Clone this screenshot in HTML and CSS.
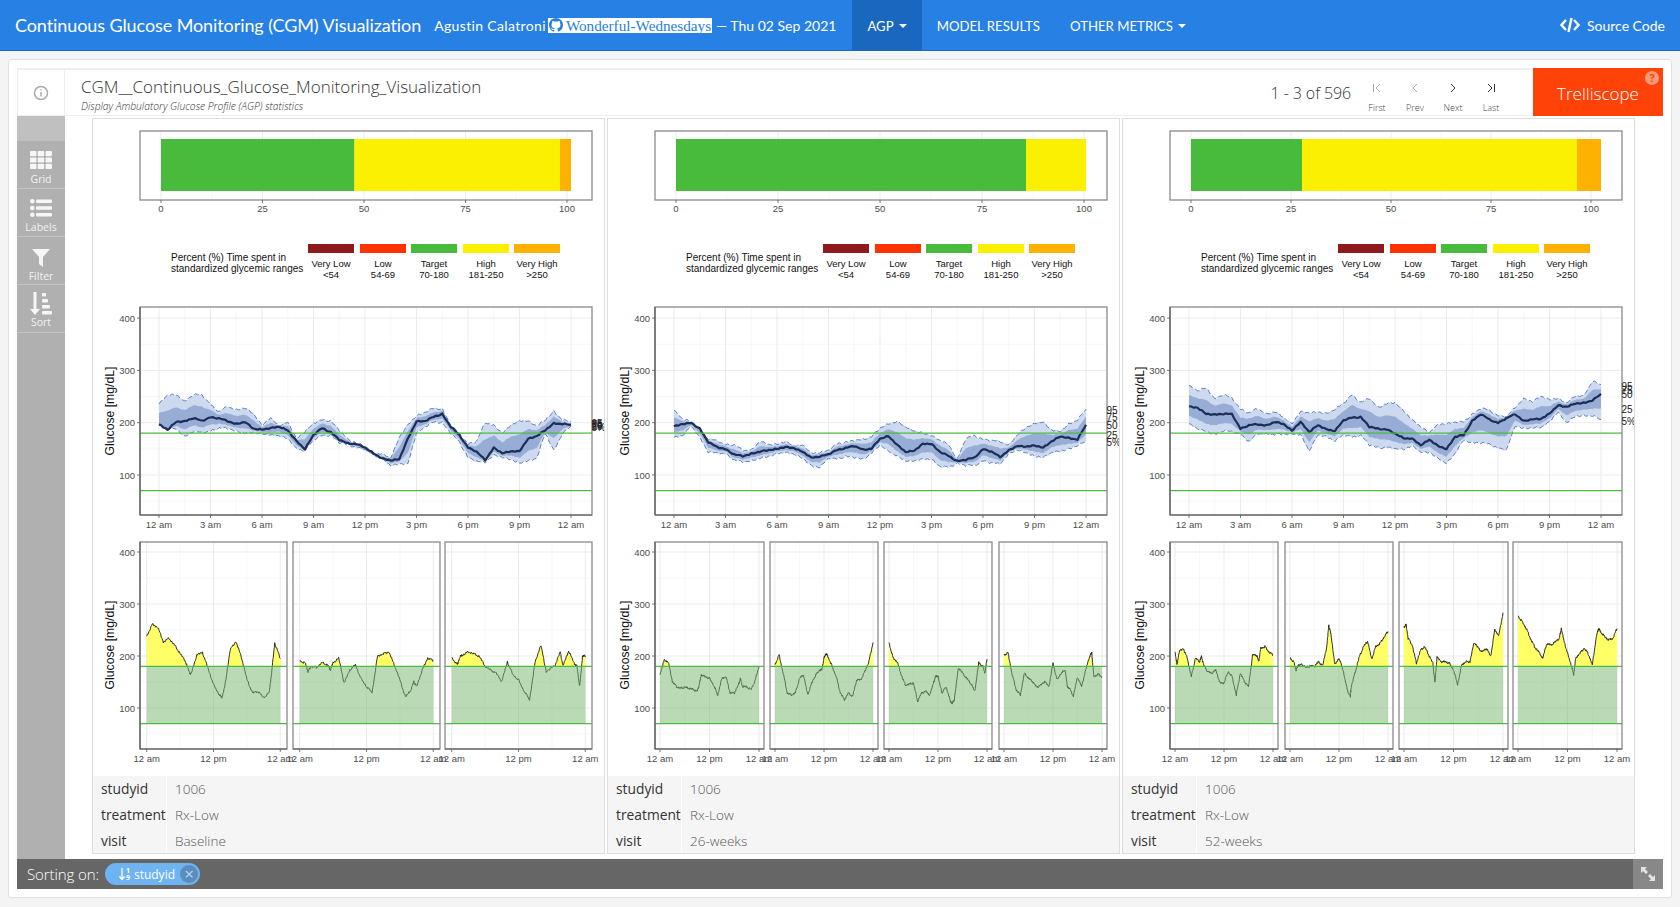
FILE: index.html
```html
<!DOCTYPE html>
<html lang="en">
<head>
  <meta charset="UTF-8" />
  <meta name="viewport" content="width=device-width, initial-scale=1" />
  <title>Continuous Glucose Monitoring (CGM) Visualization</title>
  <link rel="stylesheet" href="styles.css">
</head>
<body>
  <nav class="navbar">
    <div class="brand">Continuous Glucose Monitoring (CGM) Visualization</div>
    <div class="author">
      <span class="author-name">Agustin Calatroni</span>
      <a class="repo">
        <svg class="repo-icon" viewBox="0 0 16 16"><path d="M8 0C3.58 0 0 3.58 0 8c0 3.54 2.29 6.53 5.47 7.59.4.07.55-.17.55-.38 0-.19-.01-.82-.01-1.49-2.01.37-2.53-.49-2.69-.94-.09-.23-.48-.94-.82-1.13-.28-.15-.68-.52-.01-.53.63-.01 1.08.58 1.23.82.72 1.21 1.87.87 2.33.66.07-.52.28-.87.51-1.07-1.78-.2-3.64-.89-3.64-3.95 0-.87.31-1.59.82-2.15-.08-.2-.36-1.02.08-2.12 0 0 .67-.21 2.2.82.64-.18 1.32-.27 2-.27.68 0 1.36.09 2 .27 1.53-1.04 2.2-.82 2.2-.82.44 1.1.16 1.92.08 2.12.51.56.82 1.27.82 2.15 0 3.07-1.87 3.75-3.65 3.95.29.25.54.73.54 1.48 0 1.07-.01 1.93-.01 2.2 0 .21.15.46.55.38A8.013 8.013 0 0016 8c0-4.42-3.58-8-8-8z"/></svg>
        Wonderful-Wednesdays</a>
      <span>— Thu 02 Sep 2021</span>
    </div>
    <ul class="nav-menu">
      <li class="active">AGP <i class="caret"></i></li>
      <li>MODEL RESULTS</li>
      <li>OTHER METRICS <i class="caret"></i></li>
    </ul>
    <div class="source">
      <svg class="source-icon" viewBox="0 0 20 16"><path d="M6 3 1.5 8 6 13M14 3l4.500 5L14 13M11.500 1 8.500 15"/></svg>
      Source Code
    </div>
  </nav>

  <div class="page">
    <div class="box">
      <div class="trelliscope">
        <header class="tr-header">
          <div class="tr-info">
            <svg viewBox="0 0 16 16"><circle cx="8" cy="8" r="6.500"/><path d="M8 7v4.500M8 4.200v1.300"/></svg>
          </div>
          <div class="tr-title">
            <div class="tr-name">CGM__Continuous_Glucose_Monitoring_Visualization</div>
            <div class="tr-desc">Display Ambulatory Glucose Profile (AGP) statistics</div>
          </div>
          <div class="tr-count">1 - 3 of 596</div>
          <div class="tr-pager">
            <div class="pager-btn off">
              <svg viewBox="0 0 12 12"><path d="M2.500 2v8M9 2 5 6l4 4"/></svg>First
            </div>
            <div class="pager-btn off">
              <svg viewBox="0 0 12 12"><path d="M8 2 4 6l4 4"/></svg>Prev
            </div>
            <div class="pager-btn">
              <svg viewBox="0 0 12 12"><path d="m4 2 4 4-4 4"/></svg>Next
            </div>
            <div class="pager-btn">
              <svg viewBox="0 0 12 12"><path d="m3 2 4 4-4 4M9.500 2v8"/></svg>Last
            </div>
          </div>
          <div class="tr-logo">
            Trelliscope
            <span class="tr-help">?</span>
          </div>
        </header>

        <div class="tr-body">
          <aside class="sidebar">
            <div class="side-top"></div>
            <div class="side-btn">
              <svg class="side-icon" viewBox="0 0 22 18">
                <rect x="0" y="0" width="6.500" height="5.200" rx="1"/><rect x="7.700" y="0" width="6.500" height="5.200" rx="1"/><rect x="15.500" y="0" width="6.500" height="5.200" rx="1"/>
                <rect x="0" y="6.400" width="6.500" height="5.200" rx="1"/><rect x="7.700" y="6.400" width="6.500" height="5.200" rx="1"/><rect x="15.500" y="6.400" width="6.500" height="5.200" rx="1"/>
                <rect x="0" y="12.800" width="6.500" height="5.200" rx="1"/><rect x="7.700" y="12.800" width="6.500" height="5.200" rx="1"/><rect x="15.500" y="12.800" width="6.500" height="5.200" rx="1"/>
              </svg>
              Grid
            </div>
            <div class="side-btn">
              <svg class="side-icon" viewBox="0 0 22 18">
                <circle cx="2.300" cy="2.300" r="2.300"/><rect x="6" y="0.500" width="16" height="3.600" rx="1"/>
                <circle cx="2.300" cy="9" r="2.300"/><rect x="6" y="7.200" width="16" height="3.600" rx="1"/>
                <circle cx="2.300" cy="15.700" r="2.300"/><rect x="6" y="13.900" width="16" height="3.600" rx="1"/>
              </svg>
              Labels
            </div>
            <div class="side-btn">
              <svg class="side-icon low" viewBox="0 0 22 18"><path d="M2 0h18l-7 8v10l-4-3V8z"/></svg>
              Filter
            </div>
            <div class="side-btn">
              <svg class="side-icon tall" viewBox="0 0 22 23">
                <path d="M3.500 0h3v17h3.500l-5 6-5-6h3.500z"/>
                <rect x="12" y="1" width="4" height="3.600" rx="1"/><rect x="12" y="7" width="6" height="3.600" rx="1"/><rect x="12" y="13" width="8" height="3.600" rx="1"/><rect x="12" y="19" width="10" height="3.600" rx="1"/>
              </svg>
              Sort
            </div>
          </aside>

          <main class="panels">
            <section class="panel">
              <div class="plot" id="plot0"></div>
              <div class="cogs">
                <div class="cog"><span class="cog-name">studyid</span><span class="cog-val">1006</span></div>
                <div class="cog"><span class="cog-name">treatment</span><span class="cog-val">Rx-Low</span></div>
                <div class="cog"><span class="cog-name">visit</span><span class="cog-val">Baseline</span></div>
              </div>
            </section>
            <section class="panel">
              <div class="plot" id="plot1"></div>
              <div class="cogs">
                <div class="cog"><span class="cog-name">studyid</span><span class="cog-val">1006</span></div>
                <div class="cog"><span class="cog-name">treatment</span><span class="cog-val">Rx-Low</span></div>
                <div class="cog"><span class="cog-name">visit</span><span class="cog-val">26-weeks</span></div>
              </div>
            </section>
            <section class="panel">
              <div class="plot" id="plot2"></div>
              <div class="cogs">
                <div class="cog"><span class="cog-name">studyid</span><span class="cog-val">1006</span></div>
                <div class="cog"><span class="cog-name">treatment</span><span class="cog-val">Rx-Low</span></div>
                <div class="cog"><span class="cog-name">visit</span><span class="cog-val">52-weeks</span></div>
              </div>
            </section>
          </main>
        </div>

        <footer class="tr-footer">
          <span class="sort-label">Sorting on:</span>
          <span class="sort-pill">
            <svg class="pill-icon" viewBox="0 0 8 14"><path d="M4 1v11M1.500 9.500 4 12.500 6.500 9.500"/></svg>
            <span class="pill-digits">1<br>9</span>
            studyid
            <span class="pill-x">×</span>
          </span>
          <div class="expand">
            <svg viewBox="0 0 14 14"><path class="fill" d="M0 0h6L4 2l3 3-2 2-3-3-2 2zM14 14H8l2-2-3-3 2-2 3 3 2-2z"/></svg>
          </div>
        </footer>
      </div>
    </div>
  </div>

  <script src="charts.js"></script>
</body>
</html>
```

FILE: styles.css
```css
* {
  box-sizing: border-box;
}
body {
  margin: 0;
  background-color: #f4f4f4;
  font-family: 'Open Sans', sans-serif;
  overflow: hidden;
}

/* top navbar */
.navbar {
  display: flex;
  align-items: center;
  height: 51px;
  padding-left: 15px;
  background-color: #2780e3;
  border-bottom: 1px solid #1967be;
  color: #fff;
  font-family: 'Lato', sans-serif;
}
.brand {
  font-size: 18px;
  letter-spacing: -0.09px;
  white-space: nowrap;
}
.author {
  display: flex;
  align-items: center;
  margin-left: 13px;
  font-size: 14px;
  white-space: nowrap;
}
.author-name {
  letter-spacing: 0.35px;
}
.repo {
  display: flex;
  align-items: center;
  margin: 0 4px 0 2px;
  padding-right: 1px;
  background-color: #fff;
  color: #2780e3;
  font-family: 'Liberation Serif', serif;
  font-size: 15.200px;
  line-height: 15px;
}
.repo-icon {
  width: 14px;
  height: 14px;
  margin: 0 3px 0 1px;
  fill: #2780e3;
}
.nav-menu {
  display: flex;
  align-self: stretch;
  margin: 0 0 0 16px;
  padding: 0;
  list-style: none;
  font-size: 13.200px;
}
.nav-menu li {
  display: flex;
  align-items: center;
  gap: 5px;
  padding: 1px 15px 0;
  white-space: nowrap;
}
.nav-menu li.active {
  background-color: #1967be;
}
.caret {
  width: 0;
  height: 0;
  border-top: 4px solid #fff;
  border-left: 4px solid transparent;
  border-right: 4px solid transparent;
}
.source {
  display: flex;
  align-items: center;
  gap: 7px;
  margin-left: auto;
  padding-right: 15px;
  font-size: 14px;
}
.source-icon {
  width: 20px;
  height: 16px;
  fill: none;
  stroke: #fff;
  stroke-width: 2.400;
}

/* white card */
.page {
  padding: 8px;
}
.box {
  padding: 8px;
  background-color: #fff;
  border: 1px solid #e1e1e1;
  border-radius: 3px;
}
.trelliscope {
  display: flex;
  flex-direction: column;
  height: 821px;
}

/* trelliscope header */
.tr-header {
  display: flex;
  align-items: stretch;
  height: 48px;
  border-top: 2px solid #eeeeee;
  border-bottom: 1px solid #eeeeee;
}
.tr-info {
  display: flex;
  align-items: center;
  justify-content: center;
  width: 48px;
  border-right: 1px solid #eeeeee;
  border-left: 1px solid #eeeeee;
}
.tr-info svg {
  width: 16px;
  height: 16px;
  fill: none;
  stroke: #aaaaaa;
  stroke-width: 1.500;
}
.tr-title {
  flex: 1;
  padding: 4px 0 0 16px;
}
.tr-name {
  color: #333;
  font-size: 17px;
  font-weight: 300;
  line-height: 26px;
}
.tr-desc {
  color: #333;
  font-size: 10.300px;
  font-style: italic;
  font-weight: 300;
  line-height: 13px;
}
.tr-count {
  align-self: center;
  margin-right: 7px;
  color: #333;
  font-size: 16px;
  font-weight: 300;
  letter-spacing: -0.1px;
}
.tr-pager {
  display: flex;
  margin-right: 23px;
}
.pager-btn {
  display: flex;
  flex-direction: column;
  align-items: center;
  width: 38px;
  padding-top: 12px;
  color: #444;
  font-size: 9px;
  font-weight: 300;
}
.pager-btn svg {
  width: 12px;
  height: 12px;
  margin-bottom: 7px;
  fill: none;
  stroke: #333;
  stroke-width: 1;
}
.pager-btn.off svg {
  stroke: #aaaaaa;
}
.tr-logo {
  position: relative;
  display: flex;
  align-items: center;
  justify-content: center;
  width: 130px;
  margin: -2px 0 -1px;
  padding-top: 2px;
  background-color: #ff4308;
  color: #fff;
  font-size: 17px;
  font-weight: 300;
}
.tr-help {
  position: absolute;
  top: 3px;
  right: 4px;
  width: 14px;
  height: 14px;
  border-radius: 50%;
  background-color: #ff9a7a;
  color: #ff4308;
  font-size: 11px;
  font-weight: 700;
  line-height: 14px;
  text-align: center;
}

.tr-body {
  display: flex;
  flex: 1;
  min-height: 0;
}

/* left sidebar */
.sidebar {
  width: 48px;
  background-color: #b0b0b0;
  color: #f2f2f2;
}
.side-top {
  height: 25px;
  background-color: #c0c0c0;
}
.side-btn {
  display: flex;
  flex-direction: column;
  align-items: center;
  height: 48px;
  padding-top: 10px;
  border-bottom: 1px solid #c6c6c6;
  font-size: 10.500px;
  line-height: 13px;
}
.side-icon {
  width: 22px;
  height: 18px;
  margin-bottom: 4px;
  fill: #f6f6f6;
}
.side-icon.low {
  margin-top: 2px;
  margin-bottom: 3px;
}
.side-icon.tall {
  height: 23px;
  margin-top: -3px;
  margin-bottom: 1px;
}

/* display panels */
.panels {
  display: flex;
  flex: 1;
  gap: 2px;
  align-items: flex-start;
  padding: 2px 0 0 27px;
}
.panel {
  width: 513px;
  height: 736px;
  border: 1px solid #dddddd;
}
.plot {
  height: 657px;
  overflow: hidden;
}
.plot svg {
  display: block;
}
.cogs {
  height: 77px;
  background-color: #f5f5f5;
}
.cog {
  display: flex;
  height: 26px;
  font-size: 13.800px;
  line-height: 26px;
}
.cog:last-child {
  height: 25px;
}
.cog-name {
  width: 74px;
  padding-left: 8px;
  border-right: 1px solid #ffffff;
  color: #333;
  font-weight: 400;
}
.cog-val {
  padding-left: 8px;
  color: #555;
  font-size: 13.500px;
  font-weight: 300;
}

/* sort footer */
.tr-footer {
  position: relative;
  display: flex;
  align-items: center;
  flex: none;
  height: 30px;
  padding-left: 10px;
  background-color: #666;
  color: #fff;
}
.sort-label {
  font-size: 15px;
  font-weight: 300;
  letter-spacing: -0.1px;
}
.sort-pill {
  display: flex;
  align-items: center;
  height: 22px;
  margin-left: 6px;
  padding: 0 2px 0 13px;
  border-radius: 11px;
  background-color: #6eb4f2;
  font-size: 12px;
}
.pill-icon {
  width: 8px;
  height: 14px;
  fill: none;
  stroke: #fff;
  stroke-width: 1.300;
}
.pill-digits {
  margin: 0 4px 0 0;
  font-size: 7px;
  font-weight: 700;
  line-height: 7px;
}
.pill-x {
  width: 18px;
  height: 18px;
  margin-left: 5px;
  border-radius: 50%;
  background-color: #5a8dbd;
  color: #b9d8f4;
  font-size: 17px;
  line-height: 17px;
  text-align: center;
}
.expand {
  display: flex;
  align-items: center;
  justify-content: center;
  width: 30px;
  height: 30px;
  margin-left: auto;
  background-color: #888;
}
.expand svg {
  width: 14px;
  height: 14px;
  fill: #e4e4e4;
}

/* svg plot parts */
.plot text {
  font-family: 'Liberation Sans', sans-serif;
}
.tick-label {
  fill: #4d4d4d;
  font-size: 9.500px;
}
.axis-title {
  fill: #111;
  font-size: 12.200px;
}
.legend-text {
  fill: #111;
  font-size: 10px;
}
.legend-key {
  fill: #111;
  font-size: 9.500px;
}
.end-label {
  fill: #222;
  font-size: 10px;
}
.grid-major {
  stroke: #ebebeb;
  stroke-width: 1;
}
.grid-minor {
  stroke: #f5f5f5;
  stroke-width: 0.800;
}
.frame {
  fill: none;
  stroke: #8a8a8a;
  stroke-width: 1.300;
}
.axis-line {
  stroke: #5a5a5a;
  stroke-width: 1.200;
}
.tick-mark {
  stroke: #555;
  stroke-width: 0.800;
}
.band-outer {
  fill: #cdd9ef;
}
.band-inner {
  fill: #98add6;
}
.band-edge {
  fill: none;
  stroke: #4a76bd;
  stroke-width: 0.900;
  stroke-dasharray: 5 2.500;
}
.median {
  fill: none;
  stroke: #1c2e55;
  stroke-width: 2.200;
  stroke-linejoin: round;
}
.target-line {
  stroke: #4dbb3f;
  stroke-width: 1.200;
}
.facet-high {
  fill: #ffff66;
}
.facet-line {
  fill: none;
  stroke: #1d1d1d;
  stroke-width: 0.900;
}
.facet-target {
  fill: rgba(117, 179, 107, 0.5);
}
```

FILE: charts.js
```js
// all plots share the same panel coordinates, one svg per panel
const PLOT_W = 511;
const PLOT_H = 657;
const FRAME_L = 47;
const FRAME_R = 499;

const LEGEND = [
  { color: '#8f1a1e', top: 'Very Low', bottom: '<54', x: 215 },
  { color: '#ff3300', top: 'Low', bottom: '54-69', x: 267 },
  { color: '#48bb3c', top: 'Target', bottom: '70-180', x: 318 },
  { color: '#faf000', top: 'High', bottom: '181-250', x: 370 },
  { color: '#fdb100', top: 'Very High', bottom: '>250', x: 421 },
];

const PANELS = [
  {
    bars: [[68, 261.5, '#48bb3c'], [261.5, 467, '#faf000'], [467, 478, '#fdb100']],
    tickEnd: 474,
    p95: [236, 254, 252, 241, 254, 252, 236, 220, 231, 225, 227, 218, 195, 208, 195, 201, 169, 184, 198, 206, 204, 185, 169, 161, 155, 144, 139, 133, 173, 195, 214, 220, 227, 227, 195, 179, 160, 163, 201, 195, 179, 197, 203, 203, 195, 204, 222, 206, 200],
    p50: [197, 187, 201, 203, 209, 203, 211, 208, 203, 198, 201, 189, 187, 189, 193, 185, 165, 150, 176, 190, 182, 167, 161, 159, 152, 142, 131, 128, 131, 169, 203, 203, 211, 217, 192, 176, 153, 144, 129, 152, 141, 146, 145, 169, 175, 185, 199, 198, 195],
    p5: [195, 190, 187, 174, 184, 180, 185, 189, 189, 185, 179, 182, 179, 175, 176, 169, 150, 147, 166, 176, 176, 161, 159, 152, 148, 139, 129, 118, 122, 120, 182, 192, 201, 201, 179, 163, 134, 125, 125, 138, 133, 131, 122, 127, 133, 179, 147, 179, 192],
    facets: [
      { l: 47, r: 194, pts: [[0, 238], [1, 261], [2, 255], [3, 227], [4, 234], [5, 221], [6, 205], [7, 189], [7.7, 167], [8, 166], [9, 202], [10, 207], [11, 177], [12, 145], [13, 126], [13.5, 120], [14, 139], [15, 212], [16, 228], [17, 199], [18, 155], [19, 129], [20, 132], [21, 120], [22, 129], [22.5, 174], [23, 225], [24, 195]] },
      { l: 200, r: 347, pts: [[0, 191], [1, 186], [1.5, 170], [2, 180], [3, 178], [4, 187], [5, 183], [5.5, 173], [6, 187], [7, 196], [8, 148], [9, 173], [10, 183], [11, 157], [12, 141], [13, 130], [14, 200], [15, 204], [16, 208], [17, 183], [18, 154], [19, 121], [20, 135], [20.5, 151], [21, 141], [22, 173], [23, 196], [24, 191]] },
      { l: 352, r: 499, pts: [[0, 197], [1, 183], [1.5, 199], [2, 202], [3, 208], [4, 204], [5, 199], [6, 180], [7, 173], [8, 167], [9, 151], [10, 189], [11, 164], [12, 154], [13, 132], [14, 116], [15, 189], [16, 221], [17, 170], [18.5, 181], [19.5, 208], [20, 181], [21, 210], [22, 186], [22.5, 180], [23, 141], [23.5, 200], [24, 200]] },
    ],
    pad: 6.7,
  },
  {
    bars: [[68, 418, '#48bb3c'], [418, 478, '#faf000']],
    tickEnd: 476,
    p95: [224, 208, 201, 187, 169, 165, 159, 157, 147, 148, 163, 159, 159, 163, 157, 157, 141, 144, 146, 160, 163, 165, 169, 173, 189, 199, 201, 192, 185, 179, 176, 166, 157, 131, 169, 175, 169, 165, 165, 157, 176, 192, 198, 201, 187, 182, 198, 206, 224],
    p50: [193, 198, 199, 189, 163, 153, 150, 139, 136, 141, 144, 148, 150, 153, 152, 144, 133, 136, 139, 148, 152, 155, 149, 150, 169, 175, 157, 144, 147, 159, 160, 144, 136, 127, 129, 133, 150, 144, 135, 147, 155, 155, 156, 152, 165, 173, 171, 168, 195],
    p5: [172, 176, 192, 173, 144, 141, 142, 128, 125, 128, 131, 136, 141, 142, 141, 131, 117, 116, 131, 131, 136, 133, 131, 141, 157, 147, 135, 127, 128, 129, 131, 116, 114, 123, 118, 118, 128, 122, 122, 141, 147, 144, 135, 133, 144, 144, 150, 157, 163],
    facets: [
      { l: 47, r: 156, pts: [[0, 164], [1, 192], [2, 189], [3, 151], [4, 141], [5, 138], [6, 140], [7, 138], [8, 136], [9, 132], [9.5, 144], [10, 164], [11, 160], [12, 157], [13, 144], [14, 125], [15, 157], [16, 160], [17, 129], [18, 129], [19, 144], [19.5, 157], [20, 141], [21, 141], [22, 135], [23, 151], [24, 180]] },
      { l: 162, r: 270, pts: [[0, 183], [1, 202], [2, 167], [3, 129], [4, 125], [5, 129], [6, 157], [7, 164], [8, 125], [9, 148], [10, 164], [11, 173], [11.5, 174], [12, 196], [12.5, 205], [13, 198], [14, 180], [15, 160], [16, 129], [17, 116], [18, 129], [19, 122], [20, 154], [21, 154], [22, 170], [23, 189], [24, 226]] },
      { l: 276, r: 384, pts: [[0, 226], [1, 196], [2, 189], [3, 164], [4, 144], [5, 146], [6, 148], [7, 113], [8, 129], [9, 132], [10, 125], [11, 151], [11.5, 162], [12, 160], [13, 129], [14, 141], [15, 113], [15.5, 109], [16, 116], [17, 178], [18, 167], [19, 157], [20, 148], [21, 132], [22, 187], [23, 180], [23.5, 167], [24, 194]] },
      { l: 391, r: 499, pts: [[0, 202], [1, 206], [2, 164], [3, 135], [4, 125], [5, 167], [6, 157], [7, 151], [8, 140], [9, 144], [10, 151], [11, 141], [12, 186], [13, 154], [14, 167], [15, 173], [15.5, 141], [16, 138], [17, 123], [18, 160], [19, 141], [20, 173], [21, 200], [21.5, 206], [22, 160], [23, 165], [24, 160]] },
    ],
    pad: 5,
  },
  {
    bars: [[68, 179, '#48bb3c'], [179, 454, '#faf000'], [454, 478, '#fdb100']],
    tickEnd: 468,
    p95: [271, 262, 265, 246, 254, 246, 227, 218, 227, 217, 220, 211, 198, 220, 220, 220, 217, 227, 236, 254, 239, 246, 230, 236, 238, 224, 204, 192, 182, 195, 199, 201, 201, 217, 227, 224, 214, 211, 230, 246, 239, 252, 243, 246, 239, 250, 252, 280, 271],
    p50: [231, 229, 216, 216, 217, 216, 189, 195, 197, 195, 201, 198, 185, 201, 183, 195, 187, 185, 204, 210, 211, 192, 189, 187, 179, 171, 169, 157, 168, 155, 150, 173, 176, 204, 216, 206, 200, 208, 217, 203, 206, 208, 217, 233, 231, 236, 238, 243, 254],
    p5: [198, 189, 182, 178, 185, 182, 179, 163, 179, 179, 176, 179, 179, 176, 147, 176, 173, 166, 176, 173, 176, 157, 153, 152, 150, 150, 155, 144, 144, 131, 123, 141, 166, 163, 161, 159, 152, 147, 195, 189, 189, 192, 201, 220, 201, 211, 214, 214, 204],
    facets: [
      { l: 47, r: 155, pts: [[0, 208], [0.5, 183], [1, 208], [2, 215], [3, 196], [4, 160], [5, 196], [6, 189], [6.5, 199], [7, 183], [8, 170], [9, 167], [10, 173], [11, 148], [12, 148], [13, 170], [14, 160], [15, 125], [16, 167], [17, 151], [18, 141], [19, 202], [20, 202], [20.5, 189], [21, 215], [22, 218], [23, 208], [24, 202]] },
      { l: 162, r: 270, pts: [[0, 197], [1, 187], [1.5, 173], [2, 183], [3, 183], [4, 178], [5, 181], [6, 180], [7, 189], [8, 181], [9, 218], [9.5, 259], [10, 243], [11, 183], [12, 196], [13, 173], [14, 135], [14.8, 122], [15, 141], [16, 170], [17, 199], [18, 218], [19, 229], [20, 194], [21, 218], [22, 224], [23, 236], [24, 247]] },
      { l: 276, r: 385, pts: [[0, 255], [0.5, 261], [1, 234], [2, 221], [3, 186], [4, 211], [5, 218], [6, 202], [7, 186], [7.5, 148], [8, 198], [9, 189], [10, 189], [11, 186], [12, 173], [13, 145], [14, 183], [15, 189], [16, 189], [17, 227], [18, 215], [19, 208], [20, 215], [21, 199], [22, 250], [23, 240], [24, 283]] },
      { l: 390, r: 499, pts: [[0, 277], [1, 266], [2, 253], [3, 234], [4, 218], [5, 208], [6, 196], [7, 224], [8, 221], [9, 227], [10, 234], [10.5, 253], [11, 234], [12, 205], [13, 180], [13.5, 164], [14, 196], [15, 205], [16, 215], [17, 205], [18, 183], [19, 237], [19.5, 253], [20, 247], [21, 237], [22, 231], [23, 234], [24, 253]] },
    ],
    pad: 5,
  },
];

const HOUR_LABELS = ['12 am', '3 am', '6 am', '9 am', '12 pm', '3 pm', '6 pm', '9 pm', '12 am'];

const xMain = h => 66 + h * (412 / 24);
const yMain = v => 356 - (v - 100) * 0.523;
const yFacet = v => 589 - (v - 100) * 0.52;

function wiggle(i, amount) {
  return (Math.sin(i * 2.3) + Math.sin(i * 5.7) * 0.6 + Math.sin(i * 1.1) * 0.4) * amount;
}

function line(x1, y1, x2, y2, cls) {
  return `<line x1="${x1}" y1="${y1}" x2="${x2}" y2="${y2}" class="${cls}" />`;
}

function text(x, y, label, cls, anchor) {
  return `<text x="${x}" y="${y}" class="${cls}" text-anchor="${anchor || 'middle'}">${label}</text>`;
}

function pathOf(points) {
  return 'M' + points.map(p => `${p[0].toFixed(1)} ${p[1].toFixed(1)}`).join('L');
}

// half hour values to a denser, slightly noisy path
function denseSeries(values, noise) {
  const out = [];
  const step = 24 / (values.length - 1);
  for (let i = 0; i <= 192; i++) {
    const h = i / 8;
    const at = Math.min(Math.floor(h / step), values.length - 2);
    const t = h / step - at;
    const v = values[at] + (values[at + 1] - values[at]) * t;
    out.push([h, v + wiggle(i, noise)]);
  }
  return out;
}

function blend(from, to, amount) {
  return from.map((v, i) => v + (to[i] - v) * amount);
}

function barChart(p) {
  let s = '';
  const step = (p.tickEnd - 68) / 4;
  for (let i = 0; i < 4; i++) {
    s += line(68 + step * (i + 0.5), 12, 68 + step * (i + 0.5), 81, 'grid-minor');
  }
  for (let i = 0; i <= 4; i++) {
    s += line(68 + step * i, 12, 68 + step * i, 81, 'grid-major');
  }
  p.bars.forEach(b => {
    s += `<rect x="${b[0]}" y="20" width="${b[1] - b[0]}" height="52" fill="${b[2]}" />`;
  });
  s += `<rect x="${FRAME_L}" y="12" width="${FRAME_R - FRAME_L}" height="69" class="frame" />`;
  ['0', '25', '50', '75', '100'].forEach((label, i) => {
    s += line(68 + step * i, 81, 68 + step * i, 84, 'tick-mark');
    s += text(68 + step * i, 93, label, 'tick-label');
  });
  return s;
}

function legend() {
  let s = text(78, 142, 'Percent (%) Time spent in', 'legend-text', 'start');
  s += text(78, 153, 'standardized glycemic ranges', 'legend-text', 'start');
  LEGEND.forEach(item => {
    s += `<rect x="${item.x}" y="125" width="46" height="9" fill="${item.color}" />`;
    s += text(item.x + 23, 148, item.top, 'legend-key');
    s += text(item.x + 23, 159, item.bottom, 'legend-key');
  });
  return s;
}

function yAxis(yOf, title, titleY) {
  let s = '';
  [100, 200, 300, 400].forEach(v => {
    s += line(FRAME_L - 3, yOf(v), FRAME_L, yOf(v), 'tick-mark');
    s += text(FRAME_L - 5, yOf(v) + 3.500, v, 'tick-label', 'end');
  });
  s += `<text transform="translate(21 ${titleY}) rotate(-90)" class="axis-title" text-anchor="middle">${title}</text>`;
  return s;
}

function mainChart(p) {
  const top = 188;
  const bottom = 396;
  let s = '';

  [50, 150, 250, 350].forEach(v => { s += line(FRAME_L, yMain(v), FRAME_R, yMain(v), 'grid-minor'); });
  for (let h = 1.5; h < 24; h += 3) { s += line(xMain(h), top, xMain(h), bottom, 'grid-minor'); }
  [100, 200, 300, 400].forEach(v => { s += line(FRAME_L, yMain(v), FRAME_R, yMain(v), 'grid-major'); });
  for (let h = 0; h <= 24; h += 3) { s += line(xMain(h), top, xMain(h), bottom, 'grid-major'); }

  const p75 = blend(p.p50, p.p95, 0.55);
  const p25 = blend(p.p50, p.p5, 0.55);
  const toXY = a => a.map(d => [xMain(d[0]), yMain(d[1])]);
  const hi = toXY(denseSeries(p.p95, 1.6));
  const lo = toXY(denseSeries(p.p5, 1.6));
  const upper = toXY(denseSeries(p75, 0.6));
  const lower = toXY(denseSeries(p25, 0.6));
  const mid = toXY(denseSeries(p.p50, 0.9));

  s += `<path d="${pathOf(hi.concat(lo.slice().reverse()))}Z" class="band-outer" />`;
  s += `<path d="${pathOf(upper.concat(lower.slice().reverse()))}Z" class="band-inner" />`;
  s += `<path d="${pathOf(hi)}" class="band-edge" />`;
  s += `<path d="${pathOf(lo)}" class="band-edge" />`;
  s += `<path d="${pathOf(mid)}" class="median" />`;

  s += line(FRAME_L, yMain(180), FRAME_R, yMain(180), 'target-line');
  s += line(FRAME_L, yMain(70), FRAME_R, yMain(70), 'target-line');

  s += `<rect x="${FRAME_L}" y="${top}" width="${FRAME_R - FRAME_L}" height="${bottom - top}" class="frame" />`;
  s += line(FRAME_L, top, FRAME_L, bottom, 'axis-line');
  s += line(FRAME_L, bottom, FRAME_R, bottom, 'axis-line');

  HOUR_LABELS.forEach((label, i) => {
    s += line(xMain(i * 3), bottom, xMain(i * 3), bottom + 3, 'tick-mark');
    s += text(xMain(i * 3), 409, label, 'tick-label');
  });
  s += yAxis(yMain, 'Glucose [mg/dL]', 292);

  const last = a => a[a.length - 1];
  [['95', last(p.p95)], ['75', last(p75)], ['50', last(p.p50)], ['25', last(p25)], ['5%', last(p.p5)]].forEach(item => {
    s += text(FRAME_R - 0.5, yMain(item[1]) + 4, item[0], 'end-label', 'start');
  });
  return s;
}

function facetPoints(pts) {
  const out = [];
  let n = 0;
  for (let i = 0; i < pts.length - 1; i++) {
    for (let k = 0; k < 8; k++) {
      const t = k / 8;
      const h = pts[i][0] + (pts[i + 1][0] - pts[i][0]) * t;
      const v = pts[i][1] + (pts[i + 1][1] - pts[i][1]) * t;
      out.push([h, v + wiggle(n++, 1.6)]);
    }
  }
  out.push(pts[pts.length - 1]);
  return out;
}

function facet(f, pad, idx, panelIdx) {
  const top = 423;
  const bottom = 630;
  const x0 = f.l + pad;
  const x1 = f.r - pad;
  const xOf = h => x0 + (h / 24) * (x1 - x0);
  const clipId = `high-${panelIdx}-${idx}`;
  let s = '';

  [50, 150, 250, 350].forEach(v => { s += line(f.l, yFacet(v), f.r, yFacet(v), 'grid-minor'); });
  [6, 18].forEach(h => { s += line(xOf(h), top, xOf(h), bottom, 'grid-minor'); });
  [100, 200, 300, 400].forEach(v => { s += line(f.l, yFacet(v), f.r, yFacet(v), 'grid-major'); });
  [0, 12, 24].forEach(h => { s += line(xOf(h), top, xOf(h), bottom, 'grid-major'); });

  const pts = facetPoints(f.pts).map(d => [xOf(d[0]), yFacet(d[1])]);
  const base = yFacet(180);
  s += `<clipPath id="${clipId}"><rect x="${f.l}" y="${top}" width="${f.r - f.l}" height="${base - top}" /></clipPath>`;
  s += `<path d="${pathOf(pts)}L${x1} ${base}L${x0} ${base}Z" class="facet-high" clip-path="url(#${clipId})" />`;
  s += `<path d="${pathOf(pts)}" class="facet-line" />`;
  s += `<rect x="${x0}" y="${base}" width="${x1 - x0}" height="${yFacet(70) - base}" class="facet-target" />`;
  s += line(f.l, base, f.r, base, 'target-line');
  s += line(f.l, yFacet(70), f.r, yFacet(70), 'target-line');

  s += `<rect x="${f.l}" y="${top}" width="${f.r - f.l}" height="${bottom - top}" class="frame" />`;
  s += line(f.l, bottom, f.r, bottom, 'axis-line');
  ['12 am', '12 pm', '12 am'].forEach((label, i) => {
    s += line(xOf(i * 12), bottom, xOf(i * 12), bottom + 3, 'tick-mark');
    s += text(xOf(i * 12), 643, label, 'tick-label');
  });
  return s;
}

PANELS.forEach((p, i) => {
  let s = barChart(p) + legend() + mainChart(p);
  p.facets.forEach((f, k) => { s += facet(f, p.pad, k, i); });
  s += line(FRAME_L, 423, FRAME_L, 630, 'axis-line');
  s += yAxis(yFacet, 'Glucose [mg/dL]', 526);
  document.getElementById('plot' + i).innerHTML =
    `<svg width="${PLOT_W}" height="${PLOT_H}" viewBox="0 0 ${PLOT_W} ${PLOT_H}">${s}</svg>`;
});
```
